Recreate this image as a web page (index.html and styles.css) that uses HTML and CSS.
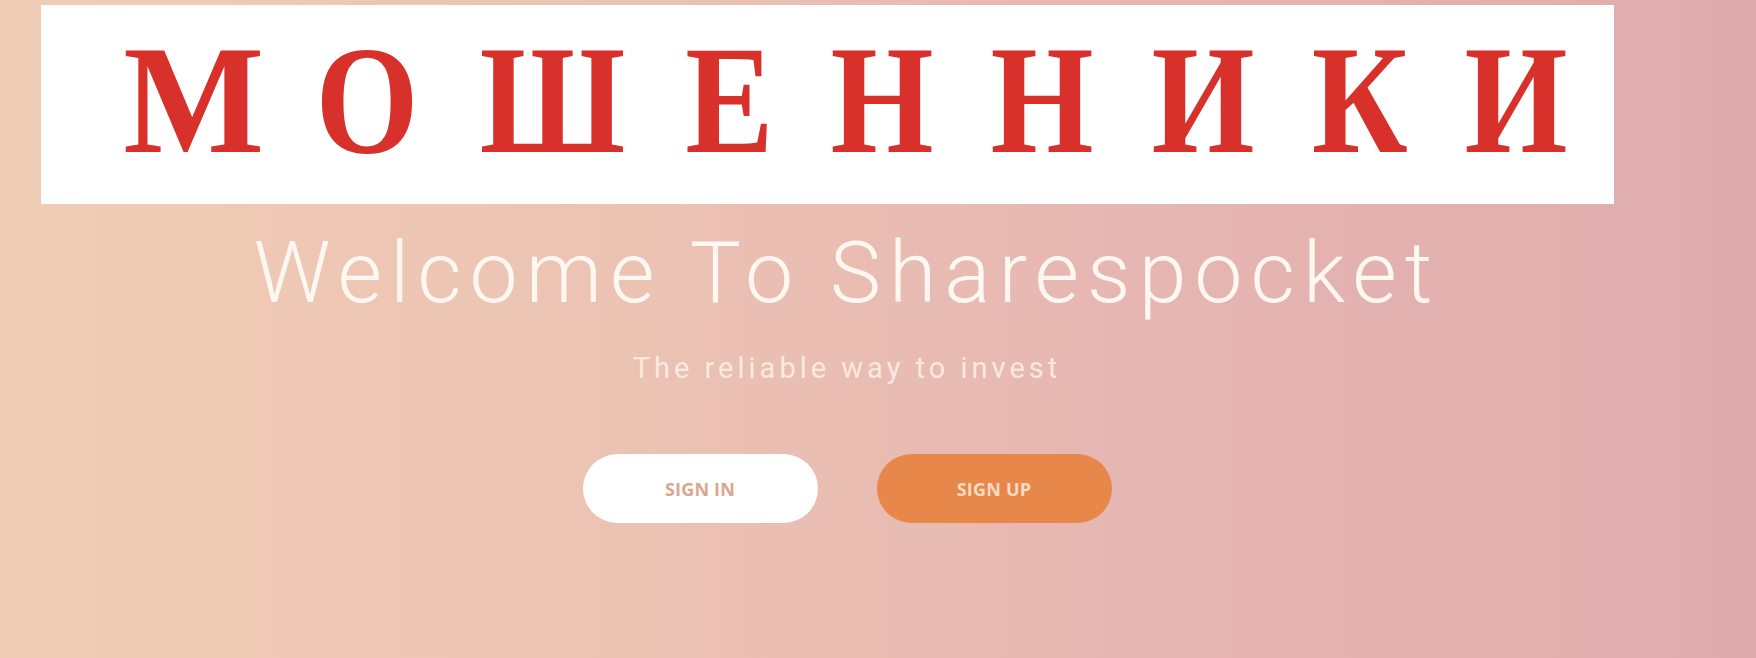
FILE: index.html
```html
<!DOCTYPE html>
<html lang="en">
<head>
<meta charset="utf-8">
<title>Sharespocket</title>
<link rel="stylesheet" href="styles.css">
</head>
<body>
<main class="page">
  <div class="banner">
    <span class="ltr ltr-wide">М</span><span class="ltr">О</span><span class="ltr">Ш</span><span class="ltr">Е</span><span class="ltr">Н</span><span class="ltr">Н</span><span class="ltr">И</span><span class="ltr">К</span><span class="ltr">И</span>
  </div>
  <h1 class="title">Welcome To Sharespocket</h1>
  <p class="subtitle">The reliable way to invest</p>
  <div class="actions">
    <a class="btn btn-in" href="#">SIGN IN</a>
    <a class="btn btn-up" href="#">SIGN UP</a>
  </div>
</main>
</body>
</html>
```
FILE: styles.css
```css
html, body {
  margin: 0;
  padding: 0;
  height: 100%;
}
body {
  width: 1756px;
  height: 658px;
  overflow: hidden;
  background: linear-gradient(90deg, #f0cdb5 0%, #ecc3b3 35%, #e6b6b2 65%, #dfacad 100%);
  font-family: Roboto, "Liberation Sans", sans-serif;
}
.page {
  width: 1694px;
  display: flex;
  flex-direction: column;
  align-items: center;
  padding-top: 5px;
}
.banner {
  align-self: flex-start;
  margin-left: 41px;
  width: 1573px;
  height: 199px;
  box-sizing: border-box;
  background: #ffffff;
  padding: 0 38px 0 80px;
  display: flex;
  justify-content: space-between;
  align-items: center;
  font-family: "Liberation Serif", "Times New Roman", serif;
  font-weight: 700;
  font-size: 154px;
  line-height: 1;
  color: #d8312c;
}
.ltr {
  display: block;
  transform: scaleX(0.86);
  padding-bottom: 10px;
}
.ltr-wide {
  transform: scaleX(0.97);
}
.title {
  margin: 19px 0 0;
  font-weight: 300;
  font-size: 86px;
  line-height: 100px;
  letter-spacing: 8px;
  color: #fff8f2;
}
.subtitle {
  margin: 30px 0 0;
  font-size: 29px;
  line-height: 30px;
  letter-spacing: 4px;
  color: rgba(255, 246, 238, 0.8);
}
.actions {
  margin-top: 71px;
  display: flex;
  gap: 59px;
}
.btn {
  width: 235px;
  height: 69px;
  border-radius: 35px;
  display: flex;
  align-items: center;
  justify-content: center;
  text-decoration: none;
  font-family: "Open Sans", sans-serif;
  font-weight: 700;
  font-size: 18px;
  letter-spacing: 0.2px;
}
.btn-in {
  background: #ffffff;
  color: #dca68e;
}
.btn-up {
  background: #e8874a;
  color: #f7dcc2;
}
```
